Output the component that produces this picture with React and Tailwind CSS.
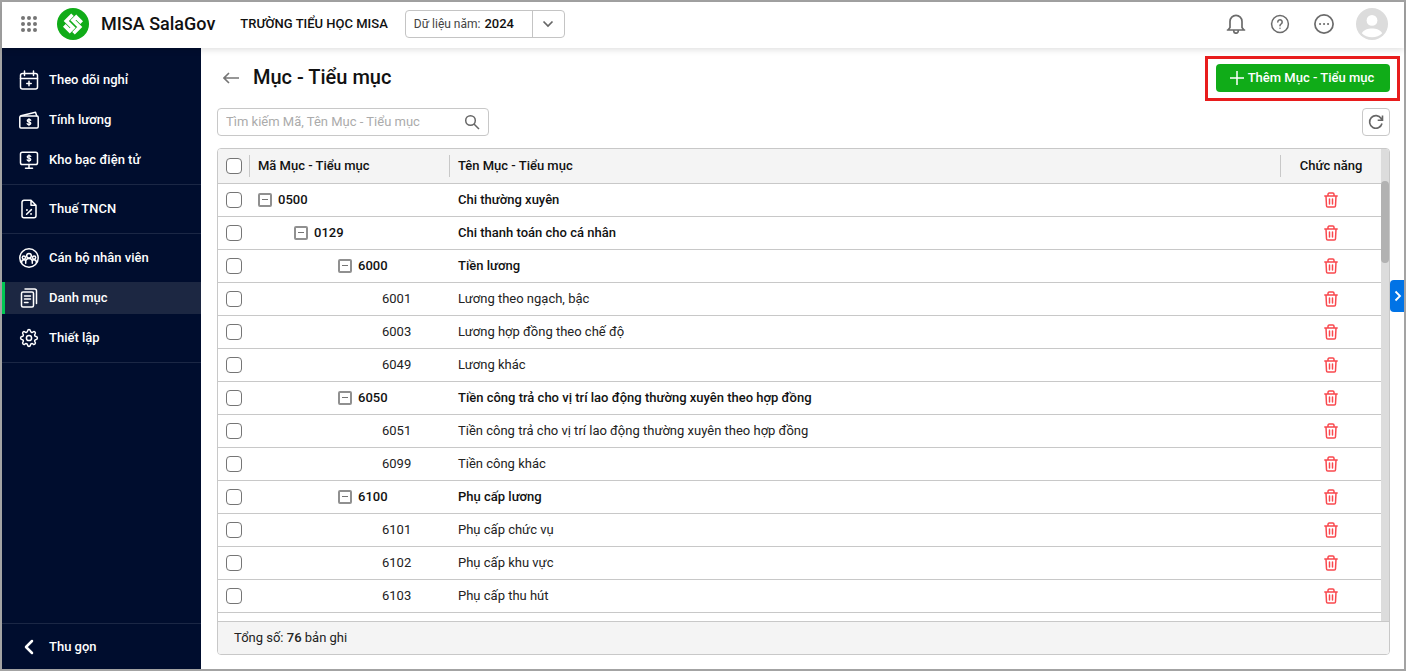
const rows = [
    { code: "0500", name: "Chi thường xuyên", level: 0 },
    { code: "0129", name: "Chi thanh toán cho cá nhân", level: 1 },
    { code: "6000", name: "Tiền lương", level: 2 },
    { code: "6001", name: "Lương theo ngạch, bậc", level: 3 },
    { code: "6003", name: "Lương hợp đồng theo chế độ", level: 3 },
    { code: "6049", name: "Lương khác", level: 3 },
    { code: "6050", name: "Tiền công trả cho vị trí lao động thường xuyên theo hợp đồng", level: 2 },
    { code: "6051", name: "Tiền công trả cho vị trí lao động thường xuyên theo hợp đồng", level: 3 },
    { code: "6099", name: "Tiền công khác", level: 3 },
    { code: "6100", name: "Phụ cấp lương", level: 2 },
    { code: "6101", name: "Phụ cấp chức vụ", level: 3 },
    { code: "6102", name: "Phụ cấp khu vực", level: 3 },
    { code: "6103", name: "Phụ cấp thu hút", level: 3 },
]

const indents = ["pl-2", "pl-11", "pl-22", "pl-33"]

function Icon({ children, size = 20, stroke = 1.5 }) {
    return <svg width={size} height={size} viewBox="0 0 20 20" fill="none" stroke="currentColor" strokeWidth={stroke} strokeLinecap="round" strokeLinejoin="round" className="shrink-0" aria-hidden="true">
        {children}
    </svg>
}

// eight rounded teeth joined by shallow valleys
function gearPath() {
    const point = (r, deg) => {
        const a = deg * Math.PI / 180
        return (10 + r * Math.cos(a)).toFixed(2) + " " + (10 + r * Math.sin(a)).toFixed(2)
    }
    let d = "M" + point(7.3, -11)
    for (let i = 0; i < 8; i++) {
        d += "A1.4 1.4 0 0 1 " + point(7.3, i * 45 + 11)
        d += "A1.6 1.6 0 0 0 " + point(7.3, i * 45 + 34)
    }
    return d + "Z"
}

const dollar = <path d="M11.8 8.6C11.4 8 10.8 7.8 10 7.8c-1 0-1.7.5-1.7 1.2 0 .8.7 1.1 1.7 1.3s1.8.5 1.8 1.3-.8 1.3-1.8 1.3c-.8 0-1.5-.3-1.8-.9M10 7v6.8" strokeWidth="1.3" />

const icons = {
    calendar: <Icon>
        <rect x="1.5" y="3.5" width="17" height="15.5" rx="2" />
        <path d="M1.5 8.5h17M5.5 1v4.5M14.5 1v4.5M10 11.3v4.4M7.8 13.5h4.4" />
    </Icon>,
    money: <Icon>
        <rect x="0.8" y="6" width="18.4" height="12" rx="1.2" />
        <path d="M2 5.8 16.5 2.2l1.2 3.6" />
        <g transform="translate(0 1.7)">{dollar}</g>
    </Icon>,
    monitor: <Icon>
        <rect x="1.5" y="2.2" width="17" height="12.3" rx="1.8" />
        <path d="M10 14.5v3.6M6.5 18.2h7" />
        <g transform="translate(0 -2.1)">{dollar}</g>
    </Icon>,
    tax: <Icon>
        <path d="M12 1.3H5A2 2 0 0 0 3 3.3v13.4a2 2 0 0 0 2 2h10a2 2 0 0 0 2-2V6.3zM12 1.3v5h5M12.4 10.6l-4.8 4.6" />
        <path d="M7.9 11h.1M12 14.9h.1" strokeWidth="1.8" />
    </Icon>,
    people: <Icon>
        <circle cx="10" cy="10" r="9.2" />
        <circle cx="10" cy="7.8" r="2.3" />
        <circle cx="4.9" cy="9.6" r="1.6" />
        <circle cx="15.1" cy="9.6" r="1.6" />
        <path d="M6.7 15.2v-1.5a3.3 3.3 0 0 1 6.6 0v1.5M2.6 14.4c0-1.6 1-2.6 2.4-2.6.8 0 1.4.3 1.8.9M17.4 14.4c0-1.6-1-2.6-2.4-2.6-.8 0-1.4.3-1.8.9" />
    </Icon>,
    docs: <Icon>
        <rect x="2.5" y="4" width="12" height="15" rx="1.5" />
        <path d="M6 1h9.5a2 2 0 0 1 2 2v12.5M5.5 8h6M5.5 11h6M5.5 14.5h3.5" />
    </Icon>,
    gear: <Icon>
        <circle cx="10" cy="10" r="2.6" />
        <path d={gearPath()} />
    </Icon>,
}

const groups = [
    [
        { icon: "calendar", label: "Theo dõi nghỉ" },
        { icon: "money", label: "Tính lương" },
        { icon: "monitor", label: "Kho bạc điện tử" },
    ],
    [{ icon: "tax", label: "Thuế TNCN" }],
    [
        { icon: "people", label: "Cán bộ nhân viên" },
        { icon: "docs", label: "Danh mục", active: true },
        { icon: "gear", label: "Thiết lập" },
    ],
]

function Logo() {
    return <svg width="32" height="32" viewBox="0 0 32 32" aria-label="MISA" role="img">
        <circle cx="16" cy="16" r="16" fill="#10ac18" />
        <g fill="none" stroke="#fff" strokeWidth="3.7">
            <path d="M15.5 6.8 9.3 13l6.7 6.700-3.200 3.200-5.500-5.500" />
            <path d="M16.500 25.200 22.700 19l-6.700-6.700 3.200-3.200 5.500 5.500" />
        </g>
    </svg>
}

function Appbar() {
    return <header className="relative z-10 flex h-[46px] shrink-0 items-center bg-white px-4 pb-0.5 shadow-[0_2px_6px_rgba(0,0,0,0.12)]">
        <button type="button" aria-label="Ứng dụng" className="flex w-[22px] justify-center text-[#757575]">
            <svg width="16" height="16" viewBox="0 0 16 16" fill="currentColor">
                {[2, 8, 14].map(y => [2, 8, 14].map(x => <circle key={x + "-" + y} cx={x} cy={y} r="2" />))}
            </svg>
        </button>
        <a href="#" className="ml-[17px] flex items-center gap-3 text-lg font-medium">
            <Logo />
            MISA SalaGov
        </a>
        <div className="ml-[25px] text-[13px] font-medium">TRƯỜNG TIỂU HỌC MISA</div>
        <div className="ml-[17px] flex h-7 w-40 rounded border border-[#c4c4c4]">
            <label htmlFor="year" className="flex items-center pl-2 text-xs text-[#444]">Dữ liệu năm:</label>
            <select id="year" className="ml-1 min-w-0 flex-1 appearance-none bg-transparent font-medium">
                <option>2024</option>
            </select>
            <button type="button" aria-label="Chọn năm" className="flex w-8 items-center justify-center border-l border-[#c4c4c4] text-[#666]">
                <svg width="12" height="12" viewBox="0 0 12 12" fill="none" stroke="currentColor" strokeWidth="1.7">
                    <path d="m1.5 3.5 4.5 4.5 4.5-4.5" />
                </svg>
            </button>
        </div>
        <div className="ml-auto flex items-center gap-6 text-[#6b6b6b]">
            <button type="button" aria-label="Thông báo">
                <Icon stroke={1.7}>
                    <path d="M1.5 16h17M2.3 15.8 4 13.6V7.4a6 6 0 0 1 12 0v6.2l1.7 2.2M7.8 17.2a2.2 2 0 0 0 4.4 0" />
                </Icon>
            </button>
            <button type="button" aria-label="Trợ giúp">
                <Icon>
                    <circle cx="10" cy="10" r="8.4" />
                    <path d="M7.8 8a2.2 2.2 0 1 1 3.6 1.7c-.8.7-1.4 1-1.4 2M10 14.2v.1" />
                </Icon>
            </button>
            <button type="button" aria-label="Thêm">
                <Icon stroke={1.7}>
                    <circle cx="10" cy="10" r="9.1" />
                    <path d="M6 10h.1M10 10h.1M14 10h.1" strokeWidth="2" />
                </Icon>
            </button>
            <button type="button" aria-label="Tài khoản" className="-ml-0.5">
                <svg width="32" height="32" viewBox="0 0 32 32">
                    <circle cx="16" cy="16" r="16" fill="#dcdcdc" />
                    <circle cx="16" cy="12.4" r="5.4" fill="#fff" />
                    <path d="M5.8 25.2c2-3.3 6-4.6 10.2-4.6s8.2 1.3 10.2 4.6c-2.6 2.6-6 4-10.2 4s-7.6-1.4-10.2-4z" fill="#fff" />
                </svg>
            </button>
        </div>
    </header>
}

function Sidebar() {
    return <nav className="flex w-[199px] shrink-0 flex-col bg-[#000d2e] pt-2 font-medium text-white">
        {groups.map((group, i) => <div key={i} className="flex flex-col gap-2 border-b border-[#1b2745] py-2">
            {group.map(item => <a key={item.label} href="#" className={item.active ? "flex h-8 items-center gap-2.5 border-l-3 border-[#00c853] bg-[#1c2742] pl-3.5" : "flex h-8 items-center gap-2.5 pl-[17px]"}>
                {icons[item.icon]}
                {item.label}
            </a>)}
        </div>)}
        <button type="button" className="mt-auto flex h-[46px] items-center gap-2.5 border-t border-[#1b2745] pl-[17px]">
            <Icon stroke={2.5}>
                <path d="m13 4-6 6 6 6" />
            </Icon>
            Thu gọn
        </button>
    </nav>
}

function Checkbox({ label }) {
    return <input type="checkbox" aria-label={label} className="mx-auto block size-4 appearance-none rounded border border-[#757575] bg-white checked:bg-[#10ac18]" />
}

function Row({ code, name, level }) {
    const parent = level < 3
    return <tr className={parent ? "h-[33px] border-b border-[#c8c8c8] font-medium" : "h-[33px] border-b border-[#c8c8c8] text-[#222]"}>
        <td><Checkbox label={"Chọn " + code} /></td>
        <td>
            <div className={"flex items-center gap-1.5 " + indents[level]}>
                {parent && <button type="button" aria-label={"Thu gọn " + code} className="flex size-3.5 items-center justify-center rounded-xs border-2 border-[#909090]">
                    <span className="h-px w-1.5 bg-[#757575]" />
                </button>}
                {code}
            </div>
        </td>
        <td className="truncate pl-2">{name}</td>
        <td>
            <button type="button" aria-label={"Xóa " + code} className="mx-auto block text-[#f9484e]">
                <svg width="16" height="16" viewBox="0 0 16 16" fill="none" stroke="currentColor" strokeWidth="1.5" strokeLinejoin="round" strokeLinecap="round">
                    <path d="M1.8 4h12.4M5 3.8V2.3C5 1.6 5.4 1 6.2 1h3.6c.8 0 1.2.6 1.2 1.3v1.5M3 4.2l.5 9.5c0 .8.5 1.3 1.3 1.3h6.4c.8 0 1.3-.5 1.3-1.3l.5-9.5M6.5 7v5M9.5 7v5" />
                </svg>
            </button>
        </td>
    </tr>
}

function Grid() {
    return <section className="mt-3 flex min-h-0 flex-1 flex-col overflow-hidden rounded border border-[#c8c8c8]">
        <div className="flex min-h-0 flex-1">
            <div className="min-w-0 flex-1 overflow-hidden">
                <table className="w-full table-fixed border-collapse text-left">
                    <thead>
                        <tr className="h-[34px] border-b border-[#c8c8c8] bg-[#f4f4f4]">
                            <th className="w-8"><div className="flex h-[22px] items-center border-r border-[#c8c8c8]"><Checkbox label="Chọn tất cả" /></div></th>
                            <th className="w-[200px] font-medium"><div className="flex h-[22px] items-center border-r border-[#c8c8c8] pl-2">Mã Mục - Tiểu mục</div></th>
                            <th className="font-medium"><div className="flex h-[22px] items-center border-r border-[#c8c8c8] pl-2">Tên Mục - Tiểu mục</div></th>
                            <th className="w-[100px] text-center font-medium">Chức năng</th>
                        </tr>
                    </thead>
                    <tbody>
                        {rows.map(row => <Row key={row.code} {...row} />)}
                    </tbody>
                </table>
            </div>
            <div className="w-2 shrink-0 bg-[#dcdcdc] pt-8">
                <div className="h-[82px] rounded-full bg-[#b2b2b2]" />
            </div>
        </div>
        <div className="h-[33px] shrink-0 border-t border-[#c8c8c8] bg-[#f4f4f4] pl-4 leading-8 text-[#222]">
            Tổng số: <span className="font-medium">76</span> bản ghi
        </div>
    </section>
}

function App() {
    return <div className="relative flex h-screen flex-col border-2 border-[#a3a3a3] bg-white font-['Roboto',sans-serif] text-[13px] text-[#111]">
        <Appbar />
        <div className="flex min-h-0 flex-1">
            <Sidebar />
            <main className="flex min-w-0 flex-1 flex-col pt-4 pr-3.5 pb-3.5 pl-4">
                <div className="flex h-7 items-center justify-between">
                    <div className="flex items-center gap-2">
                        <button type="button" aria-label="Quay lại" className="flex w-7 justify-center text-[#757575]">
                            <svg width="16" height="12" viewBox="0 0 16 12" fill="none" stroke="currentColor" strokeWidth="1.6">
                                <path d="M16 6H1.5M6 1 1 6l5 5" />
                            </svg>
                        </button>
                        <h1 className="pb-0.5 text-xl leading-7 font-medium">Mục - Tiểu mục</h1>
                    </div>
                    <div className="relative">
                        <button type="button" className="flex h-7 w-[174px] items-center justify-center gap-1 rounded bg-[#10ac18] pr-0.5 font-medium text-white">
                            <svg width="14" height="14" viewBox="0 0 14 14" fill="none" stroke="currentColor" strokeWidth="1.5" aria-hidden="true">
                                <path d="M7 0v14M0 7h14" />
                            </svg>
                            Thêm Mục - Tiểu mục
                        </button>
                        <div className="pointer-events-none absolute -top-2 -right-2.5 -bottom-[9px] -left-[11px] border-3 border-[#e81c1c]" />
                    </div>
                </div>
                <div className="mt-4 flex items-center justify-between">
                    <label className="flex h-7 w-[272px] items-center rounded border border-[#c8c8c8] pr-2">
                        <input type="text" aria-label="Tìm kiếm" placeholder="Tìm kiếm Mã, Tên Mục - Tiểu mục" className="min-w-0 flex-1 pl-2 outline-none placeholder:text-[#ababab]" />
                        <svg width="16" height="16" viewBox="0 0 16 16" fill="none" stroke="#666" strokeWidth="1.5">
                            <circle cx="6.5" cy="6.5" r="4.8" />
                            <path d="m10 10 5 5" />
                        </svg>
                    </label>
                    <button type="button" aria-label="Tải lại" className="flex size-7 items-center justify-center rounded border border-[#c8c8c8] text-[#666]">
                        <svg width="16" height="16" viewBox="0 0 16 16" fill="none" stroke="currentColor" strokeWidth="1.6">
                            <path d="M14 9.5A6.3 6.3 0 1 1 13.2 4.5L14.2 6M14.5 1.5v4.8H9.7" />
                        </svg>
                    </button>
                </div>
                <Grid />
            </main>
        </div>
        <button type="button" aria-label="Mở rộng" className="absolute top-[278px] right-0 flex h-8 w-3.5 items-center justify-end rounded-l bg-[#0073e6] pr-0.5 text-white">
            <svg width="8" height="12" viewBox="0 0 8 12" fill="none" stroke="currentColor" strokeWidth="1.8">
                <path d="m1.5 1.5 4.5 4.5-4.5 4.5" />
            </svg>
        </button>
    </div>
}

export default App
